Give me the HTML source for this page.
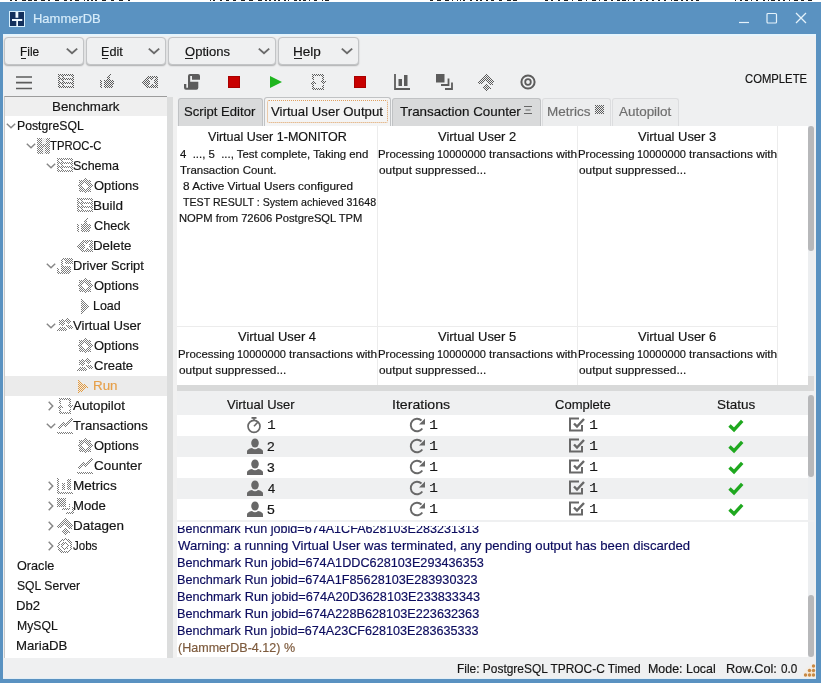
<!DOCTYPE html>
<html><head><meta charset="utf-8"><title>HammerDB</title>
<style>
*{box-sizing:border-box}
html,body{margin:0;padding:0}
body{width:821px;height:683px;overflow:hidden;background:#5a92c1;font-family:"Liberation Sans",sans-serif;font-size:13px;color:#151515;position:relative}
.a{position:absolute}
.t{position:absolute;white-space:pre;line-height:1;transform-origin:0 0;-webkit-text-stroke:0.18px currentColor}
svg{position:absolute;overflow:visible}
#root{position:absolute;left:0;top:0;width:821px;height:683px;will-change:transform}
</style></head><body>
<div id='root'>
<svg width="0" height="0" style="left:0;top:0"><defs>
<pattern id="st" width="2" height="2" patternUnits="userSpaceOnUse"><rect x="0" y="0" width="1" height="1" fill="#5c5c5c"/><rect x="1" y="1" width="1" height="1" fill="#5c5c5c"/></pattern>
<pattern id="sl" width="2" height="2" patternUnits="userSpaceOnUse"><rect x="0" y="0" width="1" height="1" fill="#7c7c7c"/><rect x="1" y="1" width="1" height="1" fill="#7c7c7c"/></pattern>
<pattern id="so" width="2" height="2" patternUnits="userSpaceOnUse"><rect x="0" y="0" width="1" height="1" fill="#e59a3c"/><rect x="1" y="1" width="1" height="1" fill="#e59a3c"/></pattern>
</defs></svg>
<div class='a' style='left:0px;top:0px;width:821px;height:1.5px;background:#fff;'></div>
<div class='a' style='left:10px;top:0px;width:2px;height:1px;background:#222;'></div>
<div class='a' style='left:15px;top:0px;width:2px;height:1px;background:#222;'></div>
<div class='a' style='left:22px;top:0px;width:4px;height:1px;background:#222;'></div>
<div class='a' style='left:28px;top:0px;width:4px;height:1px;background:#222;'></div>
<div class='a' style='left:34px;top:0px;width:3px;height:1px;background:#222;'></div>
<div class='a' style='left:41px;top:0px;width:4px;height:1px;background:#222;'></div>
<div class='a' style='left:48px;top:0px;width:2px;height:1px;background:#222;'></div>
<div class='a' style='left:55px;top:0px;width:4px;height:1px;background:#222;'></div>
<div class='a' style='left:64px;top:0px;width:3px;height:1px;background:#222;'></div>
<div class='a' style='left:70px;top:0px;width:2px;height:1px;background:#222;'></div>
<div class='a' style='left:75px;top:0px;width:4px;height:1px;background:#222;'></div>
<div class='a' style='left:84px;top:0px;width:1px;height:1px;background:#222;'></div>
<div class='a' style='left:87px;top:0px;width:2px;height:1px;background:#222;'></div>
<div class='a' style='left:91px;top:0px;width:2px;height:1px;background:#222;'></div>
<div class='a' style='left:95px;top:0px;width:2px;height:1px;background:#222;'></div>
<div class='a' style='left:102px;top:0px;width:4px;height:1px;background:#222;'></div>
<div class='a' style='left:111px;top:0px;width:3px;height:1px;background:#222;'></div>
<div class='a' style='left:119px;top:0px;width:4px;height:1px;background:#222;'></div>
<div class='a' style='left:128px;top:0px;width:2px;height:1px;background:#222;'></div>
<div class='a' style='left:210px;top:0px;width:1px;height:1px;background:#222;'></div>
<div class='a' style='left:213px;top:0px;width:2px;height:1px;background:#222;'></div>
<div class='a' style='left:220px;top:0px;width:2px;height:1px;background:#222;'></div>
<div class='a' style='left:226px;top:0px;width:3px;height:1px;background:#222;'></div>
<div class='a' style='left:233px;top:0px;width:3px;height:1px;background:#222;'></div>
<div class='a' style='left:241px;top:0px;width:4px;height:1px;background:#222;'></div>
<div class='a' style='left:249px;top:0px;width:4px;height:1px;background:#222;'></div>
<div class='a' style='left:258px;top:0px;width:4px;height:1px;background:#222;'></div>
<div class='a' style='left:265px;top:0px;width:2px;height:1px;background:#222;'></div>
<div class='a' style='left:269px;top:0px;width:2px;height:1px;background:#222;'></div>
<div class='a' style='left:274px;top:0px;width:2px;height:1px;background:#222;'></div>
<div class='a' style='left:278px;top:0px;width:2px;height:1px;background:#222;'></div>
<div class='a' style='left:284px;top:0px;width:2px;height:1px;background:#222;'></div>
<div class='a' style='left:288px;top:0px;width:1px;height:1px;background:#222;'></div>
<div class='a' style='left:294px;top:0px;width:3px;height:1px;background:#222;'></div>
<div class='a' style='left:299px;top:0px;width:2px;height:1px;background:#222;'></div>
<div class='a' style='left:303px;top:0px;width:3px;height:1px;background:#222;'></div>
<div class='a' style='left:309px;top:0px;width:1px;height:1px;background:#222;'></div>
<div class='a' style='left:314px;top:0px;width:3px;height:1px;background:#222;'></div>
<div class='a' style='left:322px;top:0px;width:1px;height:1px;background:#222;'></div>
<div class='a' style='left:325px;top:0px;width:4px;height:1px;background:#222;'></div>
<div class='a' style='left:430px;top:0px;width:3px;height:1px;background:#222;'></div>
<div class='a' style='left:437px;top:0px;width:4px;height:1px;background:#222;'></div>
<div class='a' style='left:445px;top:0px;width:4px;height:1px;background:#222;'></div>
<div class='a' style='left:452px;top:0px;width:1px;height:1px;background:#222;'></div>
<div class='a' style='left:457px;top:0px;width:1px;height:1px;background:#222;'></div>
<div class='a' style='left:460px;top:0px;width:1px;height:1px;background:#222;'></div>
<div class='a' style='left:463px;top:0px;width:2px;height:1px;background:#222;'></div>
<div class='a' style='left:470px;top:0px;width:2px;height:1px;background:#222;'></div>
<div class='a' style='left:476px;top:0px;width:2px;height:1px;background:#222;'></div>
<div class='a' style='left:480px;top:0px;width:2px;height:1px;background:#222;'></div>
<div class='a' style='left:486px;top:0px;width:2px;height:1px;background:#222;'></div>
<div class='a' style='left:491px;top:0px;width:3px;height:1px;background:#222;'></div>
<div class='a' style='left:499px;top:0px;width:3px;height:1px;background:#222;'></div>
<div class='a' style='left:507px;top:0px;width:4px;height:1px;background:#222;'></div>
<div class='a' style='left:513px;top:0px;width:4px;height:1px;background:#222;'></div>
<div class='a' style='left:545px;top:0px;width:3px;height:1px;background:#222;'></div>
<div class='a' style='left:551px;top:0px;width:2px;height:1px;background:#222;'></div>
<div class='a' style='left:558px;top:0px;width:2px;height:1px;background:#222;'></div>
<div class='a' style='left:564px;top:0px;width:4px;height:1px;background:#222;'></div>
<div class='a' style='left:572px;top:0px;width:1px;height:1px;background:#222;'></div>
<div class='a' style='left:578px;top:0px;width:4px;height:1px;background:#222;'></div>
<div class='a' style='left:586px;top:0px;width:1px;height:1px;background:#222;'></div>
<div class='a' style='left:592px;top:0px;width:4px;height:1px;background:#222;'></div>
<div class='a' style='left:599px;top:0px;width:1px;height:1px;background:#222;'></div>
<div class='a' style='left:604px;top:0px;width:3px;height:1px;background:#222;'></div>
<div class='a' style='left:611px;top:0px;width:2px;height:1px;background:#222;'></div>
<div class='a' style='left:617px;top:0px;width:3px;height:1px;background:#222;'></div>
<div class='a' style='left:622px;top:0px;width:4px;height:1px;background:#222;'></div>
<div class='a' style='left:628px;top:0px;width:1px;height:1px;background:#222;'></div>
<div class='a' style='left:633px;top:0px;width:2px;height:1px;background:#222;'></div>
<div class='a' style='left:640px;top:0px;width:2px;height:1px;background:#222;'></div>
<div class='a' style='left:646px;top:0px;width:2px;height:1px;background:#222;'></div>
<div class='a' style='left:652px;top:0px;width:2px;height:1px;background:#222;'></div>
<div class='a' style='left:658px;top:0px;width:2px;height:1px;background:#222;'></div>
<div class='a' style='left:664px;top:0px;width:2px;height:1px;background:#222;'></div>
<div class='a' style='left:671px;top:0px;width:1px;height:1px;background:#222;'></div>
<div class='a' style='left:674px;top:0px;width:4px;height:1px;background:#222;'></div>
<div class='a' style='left:681px;top:0px;width:2px;height:1px;background:#222;'></div>
<div class='a' style='left:686px;top:0px;width:2px;height:1px;background:#222;'></div>
<div class='a' style='left:691px;top:0px;width:2px;height:1px;background:#222;'></div>
<div class='a' style='left:696px;top:0px;width:3px;height:1px;background:#222;'></div>
<div class='a' style='left:735px;top:0px;width:1px;height:1px;background:#222;'></div>
<div class='a' style='left:740px;top:0px;width:2px;height:1px;background:#222;'></div>
<div class='a' style='left:745px;top:0px;width:3px;height:1px;background:#222;'></div>
<div class='a' style='left:751px;top:0px;width:1px;height:1px;background:#222;'></div>
<div class='a' style='left:756px;top:0px;width:2px;height:1px;background:#222;'></div>
<div class='a' style='left:763px;top:0px;width:2px;height:1px;background:#222;'></div>
<div class='a' style='left:768px;top:0px;width:1px;height:1px;background:#222;'></div>
<div class='a' style='left:771px;top:0px;width:4px;height:1px;background:#222;'></div>
<div class='a' style='left:778px;top:0px;width:2px;height:1px;background:#222;'></div>
<div class='a' style='left:783px;top:0px;width:2px;height:1px;background:#222;'></div>
<div class='a' style='left:789px;top:0px;width:1px;height:1px;background:#222;'></div>
<div class='a' style='left:794px;top:0px;width:4px;height:1px;background:#222;'></div>
<div class='a' style='left:801px;top:0px;width:3px;height:1px;background:#222;'></div>
<div class='a' style='left:808px;top:0px;width:4px;height:1px;background:#222;'></div>
<div class='a' style='left:3px;top:34px;width:813px;height:644.5px;background:#eff0f1;'></div>
<div class='a' style='left:3px;top:33.5px;width:813px;height:2.3px;background:#e6f5fd;'></div>
<div class='a' style='left:3px;top:677.5px;width:813px;height:1px;background:#e2eef6;'></div>
<svg style='left:9px;top:11px' width='16' height='16' viewBox='0 0 16 16'><rect x='0.5' y='0.5' width='15' height='15' fill='#12305c' stroke='#d4eefc'/><path d='M6.500 1h2.800v5.700h-2.800zM3 8h10.300v2H3zM7.300 10h1.700v5H7.300z' fill='#eef8fe'/></svg>
<svg style='left:738px;top:12px' width='12' height='12' viewBox='0 0 12 12'><path d='M1 10.5h10' stroke='#e4f2fb' stroke-width='1.2' fill='none'/></svg>
<svg style='left:766px;top:12px' width='12' height='12' viewBox='0 0 12 12'><rect x='1' y='1.5' width='9.5' height='9.5' rx='1' stroke='#e4f2fb' stroke-width='1.2' fill='none'/></svg>
<svg style='left:795px;top:12px' width='12' height='12' viewBox='0 0 12 12'><path d='M1 1l10 10M11 1L1 11' stroke='#e4f2fb' stroke-width='1.3' fill='none'/></svg>
<div class='a' style='left:4px;top:36.5px;width:80px;height:28.5px;background:#eff0f1;border:1px solid #c2c4c6;border-radius:4px;box-shadow:0 1px 1.5px rgba(0,0,0,.28)'></div>
<svg style='left:65.5px;top:48px' width='12' height='6' viewBox='0 0 12 6'><path d='M0.8 0.6L6 5.2L11.2 0.6' stroke='#6a6a6a' stroke-width='1.9' fill='none'/></svg>
<div class='a' style='left:86px;top:36.5px;width:80px;height:28.5px;background:#eff0f1;border:1px solid #c2c4c6;border-radius:4px;box-shadow:0 1px 1.5px rgba(0,0,0,.28)'></div>
<svg style='left:147.5px;top:48px' width='12' height='6' viewBox='0 0 12 6'><path d='M0.8 0.6L6 5.2L11.2 0.6' stroke='#6a6a6a' stroke-width='1.9' fill='none'/></svg>
<div class='a' style='left:168px;top:36.5px;width:108px;height:28.5px;background:#eff0f1;border:1px solid #c2c4c6;border-radius:4px;box-shadow:0 1px 1.5px rgba(0,0,0,.28)'></div>
<svg style='left:257.5px;top:48px' width='12' height='6' viewBox='0 0 12 6'><path d='M0.8 0.6L6 5.2L11.2 0.6' stroke='#6a6a6a' stroke-width='1.9' fill='none'/></svg>
<div class='a' style='left:278px;top:36.5px;width:81px;height:28.5px;background:#eff0f1;border:1px solid #c2c4c6;border-radius:4px;box-shadow:0 1px 1.5px rgba(0,0,0,.28)'></div>
<svg style='left:340.5px;top:48px' width='12' height='6' viewBox='0 0 12 6'><path d='M0.8 0.6L6 5.2L11.2 0.6' stroke='#6a6a6a' stroke-width='1.9' fill='none'/></svg>
<div class='a' style='left:20.5px;top:57.8px;width:5.5px;height:1.2px;background:#222;'></div>
<div class='a' style='left:101.8px;top:57.8px;width:6.200000000000003px;height:1.2px;background:#222;'></div>
<div class='a' style='left:184.7px;top:57.8px;width:8.800000000000011px;height:1.2px;background:#222;'></div>
<div class='a' style='left:294px;top:57.8px;width:8px;height:1.2px;background:#222;'></div>
<svg style='left:16px;top:74px' width='16' height='16' viewBox='0 0 16 16' shape-rendering='auto'><path d='M0 3h16M0 8.7h16M0 14.5h16' stroke='#5c5c5c' stroke-width='1.7' fill='none'/></svg>
<svg style='left:58px;top:74px' width='16' height='16' viewBox='0 0 16 16' shape-rendering='crispEdges'><path d='M0 0h16v14H0zM2 2v2h2V2zM6 2v2h8V2zM2 6v2h2V6zM6 6v2h8V6zM2 10v2h2v-2zM6 10v2h8v-2z' fill='url(#st)' fill-rule='evenodd' transform='translate(0 0)'/></svg>
<svg style='left:100px;top:74px' width='16' height='16' viewBox='0 0 16 16' shape-rendering='crispEdges'><path d='M0 6h2v8H0zM4 6h2L9.500 0l1.500.500L9.500 6h4.500v3l-2 5H4z' fill='url(#st)'/></svg>
<svg style='left:142px;top:74px' width='16' height='16' viewBox='0 0 16 16' shape-rendering='crispEdges'><path d='M0 8L5.5 2H16v12H5.5z' fill='url(#st)'/><path d='M7 4.5l6 7M13 4.5l-6 7' stroke='#eff0f1' stroke-width='1.8'/></svg>
<svg style='left:184px;top:74px' width='16' height='16' viewBox='0 0 16 16' shape-rendering='auto'><path d='M6 0h8a2 2 0 012 2v3.700H8V2H6.200v5.800h8.100v5.900a2 2 0 01-2 2H2a2 2 0 01-2-2V10h2.300v3.700H4V2a2 2 0 012-2z' fill='#5c5c5c'/></svg>
<div class='a' style='left:228px;top:76px;width:12px;height:12px;background:#c80000;border:1px solid #a80000'></div>
<svg style='left:270px;top:76px' width='12' height='12' viewBox='0 0 12 12'><path d='M0 0L12 6L0 12z' fill='#1fb51f'/></svg>
<svg style='left:310px;top:74px' width='16' height='16' viewBox='0 0 16 16' shape-rendering='crispEdges'><path d='M2 0h12v7h-2V2H4v4H2zM2 10h2v4h8v-3h2v5H2z' fill='url(#st)'/><path d='M0 10l3-4 3 4zM10 7h6l-3 4z' fill='url(#st)'/></svg>
<div class='a' style='left:354px;top:76px;width:12px;height:12px;background:#c80000;border:1px solid #a80000'></div>
<svg style='left:394px;top:74px' width='16' height='16' viewBox='0 0 16 16' shape-rendering='auto'><path d='M1 0v15h15' stroke='#5c5c5c' stroke-width='1.8' fill='none'/><rect x='4.5' y='5' width='3.5' height='7' fill='#5c5c5c'/><rect x='10' y='1' width='3.5' height='11' fill='#5c5c5c'/></svg>
<svg style='left:436px;top:74px' width='16' height='16' viewBox='0 0 16 16' shape-rendering='auto'><rect x='0' y='0' width='8.5' height='8.5' fill='#5c5c5c'/><path d='M5 11h7.5V4.5M9 15h7V8.5' stroke='#5c5c5c' stroke-width='1.8' fill='none'/></svg>
<svg style='left:478px;top:74px' width='16' height='16' viewBox='0 0 16 16' shape-rendering='crispEdges'><path d='M8 0L16 8L15 10.500L12 10.500L8 6.500L4.500 10L0.500 10L0 8z' fill='url(#st)'/><path d='M8.500 10L13 14.500L11 15.500L8.500 16.500L4.500 14z' fill='url(#st)'/></svg>
<svg style='left:520px;top:74px' width='16' height='16' viewBox='0 0 16 16' shape-rendering='auto'><circle cx='8' cy='8' r='6.6' fill='none' stroke='#5c5c5c' stroke-width='2'/><circle cx='8' cy='8' r='2.8' fill='none' stroke='#5c5c5c' stroke-width='1.8'/></svg>
<div class='a' style='left:4px;top:96px;width:163px;height:562px;background:#fff;border-top:1px solid #9c9c9c;border-left:1px solid #c9c9c9'></div>
<div class='a' style='left:5px;top:97px;width:162px;height:19px;background:#efefef;'></div>
<div class='a' style='left:167px;top:97px;width:6px;height:561px;background:#dcdddd;'></div>
<div class='a' style='left:173px;top:97px;width:4px;height:561px;background:#f1f1f1;'></div>
<div class='a' style='left:5px;top:376px;width:162px;height:20px;background:#ebebeb;'></div>
<svg style='left:6px;top:123px' width='10' height='6' viewBox='0 0 10 6'><path d='M0.800 0.700L5 4.700L9.200 0.700' stroke='#888' stroke-width='1.500' fill='none'/></svg>
<svg style='left:26px;top:143px' width='10' height='6' viewBox='0 0 10 6'><path d='M0.800 0.700L5 4.700L9.200 0.700' stroke='#888' stroke-width='1.500' fill='none'/></svg>
<svg style='left:46px;top:163px' width='10' height='6' viewBox='0 0 10 6'><path d='M0.800 0.700L5 4.700L9.200 0.700' stroke='#888' stroke-width='1.500' fill='none'/></svg>
<svg style='left:46px;top:263px' width='10' height='6' viewBox='0 0 10 6'><path d='M0.800 0.700L5 4.700L9.200 0.700' stroke='#888' stroke-width='1.500' fill='none'/></svg>
<svg style='left:46px;top:323px' width='10' height='6' viewBox='0 0 10 6'><path d='M0.800 0.700L5 4.700L9.200 0.700' stroke='#888' stroke-width='1.500' fill='none'/></svg>
<svg style='left:46px;top:423px' width='10' height='6' viewBox='0 0 10 6'><path d='M0.800 0.700L5 4.700L9.200 0.700' stroke='#888' stroke-width='1.500' fill='none'/></svg>
<svg style='left:48px;top:401px' width='6' height='10' viewBox='0 0 6 10'><path d='M0.700 0.800L4.700 5L0.700 9.200' stroke='#888' stroke-width='1.500' fill='none'/></svg>
<svg style='left:48px;top:481px' width='6' height='10' viewBox='0 0 6 10'><path d='M0.700 0.800L4.700 5L0.700 9.200' stroke='#888' stroke-width='1.500' fill='none'/></svg>
<svg style='left:48px;top:501px' width='6' height='10' viewBox='0 0 6 10'><path d='M0.700 0.800L4.700 5L0.700 9.200' stroke='#888' stroke-width='1.500' fill='none'/></svg>
<svg style='left:48px;top:521px' width='6' height='10' viewBox='0 0 6 10'><path d='M0.700 0.800L4.700 5L0.700 9.200' stroke='#888' stroke-width='1.500' fill='none'/></svg>
<svg style='left:48px;top:541px' width='6' height='10' viewBox='0 0 6 10'><path d='M0.700 0.800L4.700 5L0.700 9.200' stroke='#888' stroke-width='1.500' fill='none'/></svg>
<svg style='left:37px;top:138px' width='16' height='16' viewBox='0 0 16 16' shape-rendering='crispEdges'><rect x='0' y='0' width='13' height='16' fill='url(#sl)'/><rect x='4.500' y='0' width='4' height='6' fill='#fff' opacity='.75'/><rect x='5.500' y='9' width='2' height='7' fill='#fff' opacity='.75'/></svg>
<svg style='left:57px;top:158px' width='16' height='16' viewBox='0 0 16 16' shape-rendering='crispEdges'><path d='M0 0h16v14H0zM2 2v2h2V2zM6 2v2h8V2zM2 6v2h2V6zM6 6v2h8V6zM2 10v2h2v-2zM6 10v2h8v-2z' fill='url(#sl)' fill-rule='evenodd' transform='translate(0 0)'/></svg>
<svg style='left:77px;top:178px' width='16' height='16' viewBox='0 0 16 16' shape-rendering='crispEdges'><path d='M8 0l2.300 2.300H13.700V5.700L16 8l-2.300 2.300V13.700H10.300L8 16l-2.300-2.300H2.300V10.300L0 8l2.300-2.300V2.300H5.700zM8 4.700L4.700 8 8 11.300 11.300 8z' fill='url(#sl)' fill-rule='evenodd'/></svg>
<svg style='left:77px;top:198px' width='16' height='16' viewBox='0 0 16 16' shape-rendering='crispEdges'><path d='M0 0h16v14H0zM2 2v2h2V2zM6 2v2h8V2zM2 6v2h2V6zM6 6v2h8V6zM2 10v2h2v-2zM6 10v2h8v-2z' fill='url(#sl)' fill-rule='evenodd' transform='translate(0 0)'/></svg>
<svg style='left:77px;top:218px' width='16' height='16' viewBox='0 0 16 16' shape-rendering='crispEdges'><path d='M0 6h2v8H0zM4 6h2L9.500 0l1.500.500L9.500 6h4.500v3l-2 5H4z' fill='url(#sl)'/></svg>
<svg style='left:77px;top:238px' width='16' height='16' viewBox='0 0 16 16' shape-rendering='crispEdges'><path d='M0 8L5.5 2H16v12H5.5z' fill='url(#sl)'/><path d='M7 4.5l6 7M13 4.5l-6 7' stroke='#fff' stroke-width='1.8'/></svg>
<svg style='left:57px;top:258px' width='16' height='16' viewBox='0 0 16 16' shape-rendering='crispEdges'><path d='M6 0h8a2 2 0 012 2v3.700H8V2H6.200v5.800h8.100v5.900a2 2 0 01-2 2H2a2 2 0 01-2-2V10h2.300v3.700H4V2a2 2 0 012-2z' fill='url(#sl)'/></svg>
<svg style='left:77px;top:278px' width='16' height='16' viewBox='0 0 16 16' shape-rendering='crispEdges'><path d='M8 0l2.300 2.300H13.700V5.700L16 8l-2.300 2.300V13.700H10.300L8 16l-2.300-2.300H2.300V10.300L0 8l2.300-2.300V2.300H5.700zM8 4.700L4.700 8 8 11.300 11.300 8z' fill='url(#sl)' fill-rule='evenodd'/></svg>
<svg style='left:81px;top:298.5px' width='8' height='15' viewBox='0 0 8 15' shape-rendering='crispEdges'><path d='M0 0l8 7.500L0 15z' fill='url(#sl)'/></svg>
<svg style='left:57px;top:318px' width='16' height='16' viewBox='0 0 16 16' shape-rendering='crispEdges'><circle cx='5' cy='4.500' r='3.200' fill='url(#sl)'/><path d='M0 13q0-4 5-4t5 4z' fill='url(#sl)'/><circle cx='11' cy='3' r='2.600' fill='url(#sl)'/><path d='M11 7q5 0 5 4h-4.500q-1-3-2.500-3.500z' fill='url(#sl)'/></svg>
<svg style='left:77px;top:338px' width='16' height='16' viewBox='0 0 16 16' shape-rendering='crispEdges'><path d='M8 0l2.300 2.300H13.700V5.700L16 8l-2.300 2.300V13.700H10.300L8 16l-2.300-2.300H2.300V10.300L0 8l2.300-2.300V2.300H5.700zM8 4.700L4.700 8 8 11.300 11.300 8z' fill='url(#sl)' fill-rule='evenodd'/></svg>
<svg style='left:77px;top:358px' width='16' height='16' viewBox='0 0 16 16' shape-rendering='crispEdges'><circle cx='5' cy='4.500' r='3.200' fill='url(#sl)'/><path d='M0 13q0-4 5-4t5 4z' fill='url(#sl)'/><circle cx='11' cy='3' r='2.600' fill='url(#sl)'/><path d='M11 7q5 0 5 4h-4.500q-1-3-2.500-3.500z' fill='url(#sl)'/></svg>
<svg style='left:78px;top:379.5px' width='11' height='14' viewBox='0 0 11 14' shape-rendering='crispEdges'><path d='M0 0l10.500 7L0 14z' fill='url(#so)'/></svg>
<svg style='left:57px;top:398px' width='16' height='16' viewBox='0 0 16 16' shape-rendering='crispEdges'><path d='M2 0h12v7h-2V2H4v4H2zM2 10h2v4h8v-3h2v5H2z' fill='url(#sl)'/><path d='M0 10l3-4 3 4zM10 7h6l-3 4z' fill='url(#sl)'/></svg>
<svg style='left:57px;top:418px' width='16' height='16' viewBox='0 0 16 16' shape-rendering='crispEdges'><path d='M0 10L6 4l2.500 2.500L14.500 0 16 1.500 8.500 9.500 6 7 1.500 11.500z' fill='url(#sl)'/><path d='M0 13.500h16v2H0z' fill='url(#sl)'/></svg>
<svg style='left:77px;top:438px' width='16' height='16' viewBox='0 0 16 16' shape-rendering='crispEdges'><path d='M8 0l2.300 2.300H13.700V5.700L16 8l-2.300 2.300V13.700H10.300L8 16l-2.300-2.300H2.300V10.300L0 8l2.300-2.300V2.300H5.700zM8 4.700L4.700 8 8 11.300 11.300 8z' fill='url(#sl)' fill-rule='evenodd'/></svg>
<svg style='left:77px;top:458px' width='16' height='16' viewBox='0 0 16 16' shape-rendering='crispEdges'><path d='M0 10L6 4l2.500 2.500L14.500 0 16 1.500 8.500 9.500 6 7 1.500 11.500z' fill='url(#sl)'/><path d='M0 13.500h16v2H0z' fill='url(#sl)'/></svg>
<svg style='left:57px;top:478px' width='16' height='16' viewBox='0 0 16 16' shape-rendering='crispEdges'><path d='M1 0v15h15' stroke='url(#sl)' stroke-width='1.8' fill='none'/><rect x='4.5' y='5' width='3.5' height='7' fill='url(#sl)'/><rect x='10' y='1' width='3.5' height='11' fill='url(#sl)'/></svg>
<svg style='left:57px;top:498px' width='16' height='16' viewBox='0 0 16 16' shape-rendering='crispEdges'><rect x='0' y='0' width='8.5' height='8.5' fill='url(#sl)'/><path d='M5 11h7.5V4.5M9 15h7V8.5' stroke='url(#sl)' stroke-width='1.8' fill='none'/></svg>
<svg style='left:57px;top:518px' width='16' height='16' viewBox='0 0 16 16' shape-rendering='crispEdges'><path d='M8 0L16 8L15 10.500L12 10.500L8 6.500L4.500 10L0.500 10L0 8z' fill='url(#sl)'/><path d='M8.500 10L13 14.500L11 15.500L8.500 16.500L4.500 14z' fill='url(#sl)'/></svg>
<svg style='left:57px;top:538px' width='16' height='16' viewBox='0 0 16 16' shape-rendering='crispEdges'><circle cx='8' cy='8' r='6.6' fill='none' stroke='url(#sl)' stroke-width='2'/><circle cx='8' cy='8' r='2.8' fill='none' stroke='url(#sl)' stroke-width='1.8'/></svg>
<div class='a' style='left:177.5px;top:98px;width:85.0px;height:28px;background:#d9dadb;border:1px solid #c0c2c4;border-bottom:none;border-radius:3px 3px 0 0'></div>
<div class='a' style='left:392px;top:98px;width:148.5px;height:28px;background:#d9dadb;border:1px solid #c0c2c4;border-bottom:none;border-radius:3px 3px 0 0'></div>
<div class='a' style='left:541.5px;top:98px;width:69.0px;height:28px;background:#ecedee;border:1px solid #dcdddf;border-bottom:none;border-radius:3px 3px 0 0'></div>
<div class='a' style='left:611.5px;top:98px;width:67.0px;height:28px;background:#ecedee;border:1px solid #dcdddf;border-bottom:none;border-radius:3px 3px 0 0'></div>
<div class='a' style='left:264px;top:97px;width:127px;height:29px;background:#f4f4f4;border:1px solid #c0c2c4;border-bottom:none;border-radius:3px 3px 0 0'></div>
<div class='a' style='left:267px;top:100px;width:121px;height:23px;background:transparent;border:1px dotted #e0a060;border-radius:2px'></div>
<svg style='left:523px;top:105px' width='10' height='10' viewBox='0 0 10 10'><path d='M1 1.500h8M2.500 5h5M1 8.500h8' stroke='#666' stroke-width='1.200'/></svg>
<svg style='left:595px;top:105px' width='9' height='9' viewBox='0 0 9 9'><rect x='0' y='0' width='9' height='9' fill='url(#st)'/></svg>
<div class='a' style='left:177px;top:126px;width:631px;height:259px;background:#fff;'></div>
<div class='a' style='left:377px;top:126px;width:1px;height:259px;background:#ececec;'></div>
<div class='a' style='left:577px;top:126px;width:1px;height:259px;background:#ececec;'></div>
<div class='a' style='left:777px;top:126px;width:1px;height:259px;background:#ececec;'></div>
<div class='a' style='left:177px;top:326px;width:601px;height:1px;background:#ececec;'></div>
<div class='a' style='left:808px;top:126px;width:6px;height:250px;background:#eceef0;'></div>
<div class='a' style='left:808px;top:126px;width:6px;height:125px;background:#b7b8ba;border-radius:3px'></div>
<div class='a' style='left:808px;top:376px;width:6px;height:15px;background:#d9d9d9;'></div>
<div class='a' style='left:177px;top:385px;width:631px;height:5.5px;background:#d8d9d9;'></div>
<div class='a' style='left:177px;top:415px;width:631px;height:21px;background:#fff;'></div>
<div class='a' style='left:177px;top:457px;width:631px;height:21px;background:#fff;'></div>
<div class='a' style='left:177px;top:499px;width:631px;height:21px;background:#fff;'></div>
<div class='a' style='left:808px;top:395px;width:6px;height:125px;background:#eceef0;'></div>
<div class='a' style='left:808px;top:395px;width:6px;height:82px;background:#b7b8ba;border-radius:3px'></div>
<svg style='left:247px;top:417px' width='14' height='16' viewBox='0 0 14 16'><circle cx='7' cy='9.300' r='6' fill='none' stroke='#686868' stroke-width='1.700'/><path d='M4.500 0.900h5' stroke='#686868' stroke-width='1.800'/><path d='M7 9.200L11 5' stroke='#686868' stroke-width='1.600'/><path d='M7 1v2.500' stroke='#686868' stroke-width='1.500'/></svg>
<svg style='left:247px;top:438px' width='16' height='16' viewBox='0 0 16 16'><ellipse cx='8' cy='5' rx='3.800' ry='4.600' fill='#686868'/><path d='M0 16v-2.500q0-2.500 5-3.500q3 2.500 6 0q5 1 5 3.500V16z' fill='#686868'/></svg>
<svg style='left:247px;top:459px' width='16' height='16' viewBox='0 0 16 16'><ellipse cx='8' cy='5' rx='3.800' ry='4.600' fill='#686868'/><path d='M0 16v-2.500q0-2.500 5-3.500q3 2.500 6 0q5 1 5 3.500V16z' fill='#686868'/></svg>
<svg style='left:247px;top:480px' width='16' height='16' viewBox='0 0 16 16'><ellipse cx='8' cy='5' rx='3.800' ry='4.600' fill='#686868'/><path d='M0 16v-2.500q0-2.500 5-3.500q3 2.500 6 0q5 1 5 3.500V16z' fill='#686868'/></svg>
<svg style='left:247px;top:501px' width='16' height='16' viewBox='0 0 16 16'><ellipse cx='8' cy='5' rx='3.800' ry='4.600' fill='#686868'/><path d='M0 16v-2.500q0-2.500 5-3.500q3 2.500 6 0q5 1 5 3.500V16z' fill='#686868'/></svg>
<svg style='left:409px;top:417px' width='17' height='16' viewBox='0 0 17 16'><path d='M13.300 11.500A6.300 6.300 0 1 1 12.500 3.500' fill='none' stroke='#686868' stroke-width='1.900'/><path d='M16 1.500v6h-6z' fill='#686868'/></svg>
<svg style='left:569px;top:417px' width='16' height='15' viewBox='0 0 16 15'><path d='M13 8v5.500H1V1.500h9' fill='none' stroke='#686868' stroke-width='2'/><path d='M5 6.500l3 3L15 2' fill='none' stroke='#686868' stroke-width='2.400'/></svg>
<svg style='left:728px;top:419px' width='16' height='13' viewBox='0 0 16 13'><path d='M1.500 6.500L6 10.800L14.200 1.800' fill='none' stroke='#1fa81f' stroke-width='3.400'/></svg>
<svg style='left:409px;top:438px' width='17' height='16' viewBox='0 0 17 16'><path d='M13.300 11.500A6.300 6.300 0 1 1 12.500 3.500' fill='none' stroke='#686868' stroke-width='1.900'/><path d='M16 1.500v6h-6z' fill='#686868'/></svg>
<svg style='left:569px;top:438px' width='16' height='15' viewBox='0 0 16 15'><path d='M13 8v5.500H1V1.500h9' fill='none' stroke='#686868' stroke-width='2'/><path d='M5 6.500l3 3L15 2' fill='none' stroke='#686868' stroke-width='2.400'/></svg>
<svg style='left:728px;top:440px' width='16' height='13' viewBox='0 0 16 13'><path d='M1.500 6.500L6 10.800L14.200 1.800' fill='none' stroke='#1fa81f' stroke-width='3.400'/></svg>
<svg style='left:409px;top:459px' width='17' height='16' viewBox='0 0 17 16'><path d='M13.300 11.500A6.300 6.300 0 1 1 12.500 3.500' fill='none' stroke='#686868' stroke-width='1.900'/><path d='M16 1.500v6h-6z' fill='#686868'/></svg>
<svg style='left:569px;top:459px' width='16' height='15' viewBox='0 0 16 15'><path d='M13 8v5.500H1V1.500h9' fill='none' stroke='#686868' stroke-width='2'/><path d='M5 6.500l3 3L15 2' fill='none' stroke='#686868' stroke-width='2.400'/></svg>
<svg style='left:728px;top:461px' width='16' height='13' viewBox='0 0 16 13'><path d='M1.500 6.500L6 10.800L14.200 1.800' fill='none' stroke='#1fa81f' stroke-width='3.400'/></svg>
<svg style='left:409px;top:480px' width='17' height='16' viewBox='0 0 17 16'><path d='M13.300 11.500A6.300 6.300 0 1 1 12.500 3.500' fill='none' stroke='#686868' stroke-width='1.900'/><path d='M16 1.500v6h-6z' fill='#686868'/></svg>
<svg style='left:569px;top:480px' width='16' height='15' viewBox='0 0 16 15'><path d='M13 8v5.500H1V1.500h9' fill='none' stroke='#686868' stroke-width='2'/><path d='M5 6.500l3 3L15 2' fill='none' stroke='#686868' stroke-width='2.400'/></svg>
<svg style='left:728px;top:482px' width='16' height='13' viewBox='0 0 16 13'><path d='M1.500 6.500L6 10.800L14.200 1.800' fill='none' stroke='#1fa81f' stroke-width='3.400'/></svg>
<svg style='left:409px;top:501px' width='17' height='16' viewBox='0 0 17 16'><path d='M13.300 11.500A6.300 6.300 0 1 1 12.500 3.500' fill='none' stroke='#686868' stroke-width='1.900'/><path d='M16 1.500v6h-6z' fill='#686868'/></svg>
<svg style='left:569px;top:501px' width='16' height='15' viewBox='0 0 16 15'><path d='M13 8v5.500H1V1.500h9' fill='none' stroke='#686868' stroke-width='2'/><path d='M5 6.500l3 3L15 2' fill='none' stroke='#686868' stroke-width='2.400'/></svg>
<svg style='left:728px;top:503px' width='16' height='13' viewBox='0 0 16 13'><path d='M1.500 6.500L6 10.800L14.200 1.800' fill='none' stroke='#1fa81f' stroke-width='3.400'/></svg>
<div class='a' style='left:177px;top:522px;width:631px;height:135px;background:#fff;'></div>
<div class='a' style='left:808px;top:522px;width:6px;height:135px;background:#eceef0;'></div>
<div class='a' style='left:808px;top:595px;width:6px;height:62px;background:#b7b8ba;border-radius:3px'></div>
<div class='a' style='left:803px;top:665px;width:12px;height:12px;background:transparent;background:radial-gradient(circle at 80% 80%,#fbe3c4 0,rgba(251,227,196,0) 75%)'></div>
<svg style='left:802px;top:664px' width='14' height='13' viewBox='0 0 14 13'><circle cx='11.5' cy='2' r='1.700' fill='#c98a45'/><circle cx='7.5' cy='6.5' r='1.700' fill='#c98a45'/><circle cx='11.5' cy='6.5' r='1.700' fill='#c98a45'/><circle cx='3.5' cy='11' r='1.700' fill='#c98a45'/><circle cx='7.5' cy='11' r='1.700' fill='#c98a45'/><circle cx='11.5' cy='11' r='1.700' fill='#c98a45'/></svg>
<div class='t' style="left:32.74px;top:12.0px;font-size:13px;color:#d6ecfa;transform:scaleX(0.9974)">HammerDB</div>
<div class='t' style="left:20.03px;top:44.6px;font-size:13px;color:#151515;transform:scaleX(0.9163)">File</div>
<div class='t' style="left:101.27px;top:44.6px;font-size:13px;color:#151515;transform:scaleX(0.9718)">Edit</div>
<div class='t' style="left:184.68px;top:44.6px;font-size:13px;color:#151515;transform:scaleX(1.0037)">Options</div>
<div class='t' style="left:293.39px;top:44.6px;font-size:13px;color:#151515;transform:scaleX(1.0426)">Help</div>
<div class='t' style="left:745.42px;top:71.8px;font-size:13px;color:#151515;transform:scaleX(0.8676)">COMPLETE</div>
<div class='t' style="left:184.35px;top:105.0px;font-size:13px;color:#151515;transform:scaleX(1.0067)">Script Editor</div>
<div class='t' style="left:271.37px;top:105.0px;font-size:13px;color:#151515;transform:scaleX(1.0142)">Virtual User Output</div>
<div class='t' style="left:400.04px;top:105.0px;font-size:13px;color:#151515;transform:scaleX(1.0300)">Transaction Counter</div>
<div class='t' style="left:547.40px;top:105.0px;font-size:13px;color:#6e6e6e;transform:scaleX(1.0372)">Metrics</div>
<div class='t' style="left:619.29px;top:105.0px;font-size:13px;color:#6e6e6e;transform:scaleX(1.0334)">Autopilot</div>
<div class='t' style="left:51.81px;top:99.5px;font-size:13px;color:#151515;transform:scaleX(1.0271)">Benchmark</div>
<div class='t' style="left:16.50px;top:119.0px;font-size:13px;color:#151515;transform:scaleX(0.9427)">PostgreSQL</div>
<div class='t' style="left:50.28px;top:139.0px;font-size:13px;color:#151515;transform:scaleX(0.8669)">TPROC-C</div>
<div class='t' style="left:72.70px;top:159.0px;font-size:13px;color:#151515;transform:scaleX(0.9647)">Schema</div>
<div class='t' style="left:93.58px;top:179.0px;font-size:13px;color:#151515;transform:scaleX(0.9968)">Options</div>
<div class='t' style="left:93.00px;top:199.0px;font-size:13px;color:#151515;transform:scaleX(1.0395)">Build</div>
<div class='t' style="left:93.56px;top:219.0px;font-size:13px;color:#151515;transform:scaleX(0.9734)">Check</div>
<div class='t' style="left:93.01px;top:239.0px;font-size:13px;color:#151515;transform:scaleX(1.0248)">Delete</div>
<div class='t' style="left:72.65px;top:259.0px;font-size:13px;color:#151515;transform:scaleX(0.9906)">Driver Script</div>
<div class='t' style="left:93.58px;top:279.0px;font-size:13px;color:#151515;transform:scaleX(0.9968)">Options</div>
<div class='t' style="left:93.08px;top:299.0px;font-size:13px;color:#151515;transform:scaleX(0.9578)">Load</div>
<div class='t' style="left:73.47px;top:319.0px;font-size:13px;color:#151515;transform:scaleX(1.0080)">Virtual User</div>
<div class='t' style="left:93.58px;top:339.0px;font-size:13px;color:#151515;transform:scaleX(0.9968)">Options</div>
<div class='t' style="left:93.54px;top:359.0px;font-size:13px;color:#151515;transform:scaleX(1.0018)">Create</div>
<div class='t' style="left:93.01px;top:379.0px;font-size:13px;color:#e6a04a;transform:scaleX(1.0259)">Run</div>
<div class='t' style="left:73.49px;top:399.0px;font-size:13px;color:#151515;transform:scaleX(1.0255)">Autopilot</div>
<div class='t' style="left:73.45px;top:419.0px;font-size:13px;color:#151515;transform:scaleX(1.0109)">Transactions</div>
<div class='t' style="left:93.58px;top:439.0px;font-size:13px;color:#151515;transform:scaleX(0.9968)">Options</div>
<div class='t' style="left:93.52px;top:459.0px;font-size:13px;color:#151515;transform:scaleX(1.0354)">Counter</div>
<div class='t' style="left:72.59px;top:479.0px;font-size:13px;color:#151515;transform:scaleX(1.0422)">Metrics</div>
<div class='t' style="left:72.62px;top:499.0px;font-size:13px;color:#151515;transform:scaleX(1.0126)">Mode</div>
<div class='t' style="left:72.60px;top:519.0px;font-size:13px;color:#151515;transform:scaleX(1.0349)">Datagen</div>
<div class='t' style="left:73.09px;top:539.0px;font-size:13px;color:#151515;transform:scaleX(0.8875)">Jobs</div>
<div class='t' style="left:16.99px;top:559.0px;font-size:13px;color:#151515;transform:scaleX(0.9742)">Oracle</div>
<div class='t' style="left:16.53px;top:579.0px;font-size:13px;color:#151515;transform:scaleX(0.9361)">SQL Server</div>
<div class='t' style="left:16.42px;top:599.0px;font-size:13px;color:#151515;transform:scaleX(1.0120)">Db2</div>
<div class='t' style="left:16.50px;top:619.0px;font-size:13px;color:#151515;transform:scaleX(0.9387)">MySQL</div>
<div class='t' style="left:16.42px;top:639.0px;font-size:13px;color:#151515;transform:scaleX(1.0173)">MariaDB</div>
<div class='t' style="left:207.78px;top:130.0px;font-size:13px;color:#151515;transform:scaleX(0.9643)">Virtual User 1-MONITOR</div>
<div class='t' style="left:179.86px;top:148.9px;font-size:11px;color:#151515;transform:scaleX(1.0356)">4  ..., 5  ..., Test complete, Taking end</div>
<div class='t' style="left:179.73px;top:164.9px;font-size:11px;color:#151515;transform:scaleX(1.0420)">Transaction Count.</div>
<div class='t' style="left:182.75px;top:180.9px;font-size:11px;color:#151515;transform:scaleX(1.0712)">8 Active Virtual Users configured</div>
<div class='t' style="left:182.85px;top:196.9px;font-size:11px;color:#151515;transform:scaleX(0.9658)">TEST RESULT : System achieved 31648</div>
<div class='t' style="left:179.08px;top:212.9px;font-size:11px;color:#151515;transform:scaleX(1.0168)">NOPM from 72606 PostgreSQL TPM</div>
<div class='t' style="left:437.93px;top:130.0px;font-size:13px;color:#151515;transform:scaleX(0.9959)">Virtual User 2</div>
<div class='t' style="left:378.26px;top:148.9px;font-size:11px;color:#151515;transform:scaleX(1.0381)">Processing</div>
<div class='t' style="left:436.99px;top:148.9px;font-size:11px;color:#151515;transform:scaleX(1.0000)">10000000</div>
<div class='t' style="left:489.19px;top:148.9px;font-size:11px;color:#151515;transform:scaleX(1.0767)">transactions with</div>
<div class='t' style="left:378.84px;top:164.9px;font-size:11px;color:#151515;transform:scaleX(1.0764)">output suppressed...</div>
<div class='t' style="left:637.93px;top:130.0px;font-size:13px;color:#151515;transform:scaleX(0.9956)">Virtual User 3</div>
<div class='t' style="left:578.26px;top:148.9px;font-size:11px;color:#151515;transform:scaleX(1.0381)">Processing</div>
<div class='t' style="left:636.99px;top:148.9px;font-size:11px;color:#151515;transform:scaleX(1.0000)">10000000</div>
<div class='t' style="left:689.19px;top:148.9px;font-size:11px;color:#151515;transform:scaleX(1.0767)">transactions with</div>
<div class='t' style="left:578.84px;top:164.9px;font-size:11px;color:#151515;transform:scaleX(1.0764)">output suppressed...</div>
<div class='t' style="left:237.93px;top:330.0px;font-size:13px;color:#151515;transform:scaleX(0.9939)">Virtual User 4</div>
<div class='t' style="left:178.26px;top:348.9px;font-size:11px;color:#151515;transform:scaleX(1.0381)">Processing</div>
<div class='t' style="left:236.99px;top:348.9px;font-size:11px;color:#151515;transform:scaleX(1.0000)">10000000</div>
<div class='t' style="left:289.19px;top:348.9px;font-size:11px;color:#151515;transform:scaleX(1.0767)">transactions with</div>
<div class='t' style="left:178.84px;top:364.9px;font-size:11px;color:#151515;transform:scaleX(1.0764)">output suppressed...</div>
<div class='t' style="left:437.93px;top:330.0px;font-size:13px;color:#151515;transform:scaleX(0.9956)">Virtual User 5</div>
<div class='t' style="left:378.26px;top:348.9px;font-size:11px;color:#151515;transform:scaleX(1.0381)">Processing</div>
<div class='t' style="left:436.99px;top:348.9px;font-size:11px;color:#151515;transform:scaleX(1.0000)">10000000</div>
<div class='t' style="left:489.19px;top:348.9px;font-size:11px;color:#151515;transform:scaleX(1.0767)">transactions with</div>
<div class='t' style="left:378.84px;top:364.9px;font-size:11px;color:#151515;transform:scaleX(1.0764)">output suppressed...</div>
<div class='t' style="left:637.93px;top:330.0px;font-size:13px;color:#151515;transform:scaleX(0.9959)">Virtual User 6</div>
<div class='t' style="left:578.26px;top:348.9px;font-size:11px;color:#151515;transform:scaleX(1.0381)">Processing</div>
<div class='t' style="left:636.99px;top:348.9px;font-size:11px;color:#151515;transform:scaleX(1.0000)">10000000</div>
<div class='t' style="left:689.19px;top:348.9px;font-size:11px;color:#151515;transform:scaleX(1.0767)">transactions with</div>
<div class='t' style="left:578.84px;top:364.9px;font-size:11px;color:#151515;transform:scaleX(1.0764)">output suppressed...</div>
<div class='t' style="left:226.57px;top:397.8px;font-size:13px;color:#151515;transform:scaleX(0.9976)">Virtual User</div>
<div class='t' style="left:392.21px;top:397.8px;font-size:13px;color:#151515;transform:scaleX(1.0876)">Iterations</div>
<div class='t' style="left:555.24px;top:397.8px;font-size:13px;color:#151515;transform:scaleX(1.0011)">Complete</div>
<div class='t' style="left:717.12px;top:397.8px;font-size:13px;color:#151515;transform:scaleX(1.0363)">Status</div>
<div class='t' style="left:266.66px;top:419.0px;font-size:13px;color:#151515;transform:scaleX(1.1360);font-family:'Liberation Mono';-webkit-text-stroke:0">1</div>
<div class='t' style="left:428.53px;top:419.0px;font-size:13px;color:#151515;transform:scaleX(1.1676);font-family:'Liberation Mono';-webkit-text-stroke:0">1</div>
<div class='t' style="left:588.53px;top:419.0px;font-size:13px;color:#151515;transform:scaleX(1.1676);font-family:'Liberation Mono';-webkit-text-stroke:0">1</div>
<div class='t' style="left:267.43px;top:440.0px;font-size:13px;color:#151515;transform:scaleX(1.0635)">2</div>
<div class='t' style="left:428.53px;top:440.0px;font-size:13px;color:#151515;transform:scaleX(1.1676);font-family:'Liberation Mono';-webkit-text-stroke:0">1</div>
<div class='t' style="left:588.53px;top:440.0px;font-size:13px;color:#151515;transform:scaleX(1.1676);font-family:'Liberation Mono';-webkit-text-stroke:0">1</div>
<div class='t' style="left:267.36px;top:461.0px;font-size:13px;color:#151515;transform:scaleX(1.0706)">3</div>
<div class='t' style="left:428.53px;top:461.0px;font-size:13px;color:#151515;transform:scaleX(1.1676);font-family:'Liberation Mono';-webkit-text-stroke:0">1</div>
<div class='t' style="left:588.53px;top:461.0px;font-size:13px;color:#151515;transform:scaleX(1.1676);font-family:'Liberation Mono';-webkit-text-stroke:0">1</div>
<div class='t' style="left:267.75px;top:482.0px;font-size:13px;color:#151515;transform:scaleX(0.9837)">4</div>
<div class='t' style="left:428.53px;top:482.0px;font-size:13px;color:#151515;transform:scaleX(1.1676);font-family:'Liberation Mono';-webkit-text-stroke:0">1</div>
<div class='t' style="left:588.53px;top:482.0px;font-size:13px;color:#151515;transform:scaleX(1.1676);font-family:'Liberation Mono';-webkit-text-stroke:0">1</div>
<div class='t' style="left:267.31px;top:503.0px;font-size:13px;color:#151515;transform:scaleX(1.0767)">5</div>
<div class='t' style="left:428.53px;top:503.0px;font-size:13px;color:#151515;transform:scaleX(1.1676);font-family:'Liberation Mono';-webkit-text-stroke:0">1</div>
<div class='t' style="left:588.53px;top:503.0px;font-size:13px;color:#151515;transform:scaleX(1.1676);font-family:'Liberation Mono';-webkit-text-stroke:0">1</div>
<div class='t' style="left:177.47px;top:521.7px;font-size:13px;color:#0b0b5e;transform:scaleX(0.9681)">Benchmark Run jobid=674A1CFA628103E283231313</div>
<div class='t' style="left:178.31px;top:538.7px;font-size:13px;color:#0b0b5e;transform:scaleX(1.0093)">Warning: a running Virtual User was terminated, any pending output has been discarded</div>
<div class='t' style="left:177.46px;top:555.7px;font-size:13px;color:#0b0b5e;transform:scaleX(0.9746)">Benchmark Run jobid=674A1DDC628103E293436353</div>
<div class='t' style="left:177.47px;top:572.7px;font-size:13px;color:#0b0b5e;transform:scaleX(0.9726)">Benchmark Run jobid=674A1F85628103E283930323</div>
<div class='t' style="left:177.46px;top:589.7px;font-size:13px;color:#0b0b5e;transform:scaleX(0.9764)">Benchmark Run jobid=674A20D3628103E233833343</div>
<div class='t' style="left:177.46px;top:606.7px;font-size:13px;color:#0b0b5e;transform:scaleX(0.9758)">Benchmark Run jobid=674A228B628103E223632363</div>
<div class='t' style="left:177.47px;top:623.7px;font-size:13px;color:#0b0b5e;transform:scaleX(0.9690)">Benchmark Run jobid=674A23CF628103E283635333</div>
<div class='t' style="left:177.74px;top:640.6px;font-size:13px;color:#7d5a3c;transform:scaleX(0.9648)">(HammerDB-4.12) %</div>
<div class='t' style="left:456.83px;top:661.6px;font-size:13px;color:#151515;transform:scaleX(0.9172)">File: PostgreSQL TPROC-C Timed</div>
<div class='t' style="left:648.28px;top:661.6px;font-size:13px;color:#151515;transform:scaleX(0.9559)">Mode: Local</div>
<div class='t' style="left:725.76px;top:661.6px;font-size:13px;color:#151515;transform:scaleX(0.9767)">Row.Col:</div>
<div class='t' style="left:781.10px;top:661.6px;font-size:13px;color:#151515;transform:scaleX(0.9003)">0.0</div>
<div class='a' style='left:177px;top:520px;width:631px;height:2px;background:#eff0f1;'></div>
<div class='a' style='left:177px;top:522px;width:631px;height:3.5px;background:#fff;'></div>
</div>
</body></html>
